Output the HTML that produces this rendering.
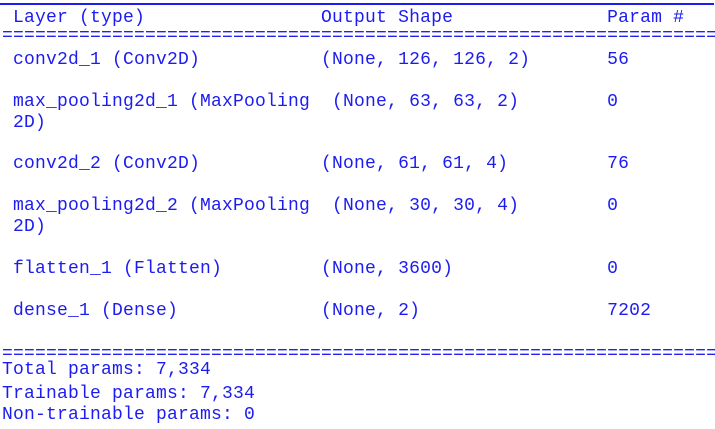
<!DOCTYPE html>
<html><head><style>
html,body{margin:0;padding:0;background:#fff;width:715px;height:429px;overflow:hidden}
.t{position:absolute;left:2px;white-space:pre;font-family:"Liberation Mono","Courier New",monospace;font-size:18px;letter-spacing:0.2px;line-height:22px;color:#1c1cf0}
.top{position:absolute;left:0;top:3px;width:714px;height:2px;background:#1c1cf0}
.eq{overflow:hidden;width:713px;color:#2020f0}
</style></head><body>
<div class="top"></div>
<div class="t" style="top:7px"> Layer (type)                Output Shape              Param #</div>
<div class="t eq" style="top:25px">=================================================================================</div>
<div class="t" style="top:49px"> conv2d_1 (Conv2D)           (None, 126, 126, 2)       56</div>
<div class="t" style="top:91px"> max_pooling2d_1 (MaxPooling  (None, 63, 63, 2)        0</div>
<div class="t" style="top:112px"> 2D)</div>
<div class="t" style="top:153px"> conv2d_2 (Conv2D)           (None, 61, 61, 4)         76</div>
<div class="t" style="top:195px"> max_pooling2d_2 (MaxPooling  (None, 30, 30, 4)        0</div>
<div class="t" style="top:216px"> 2D)</div>
<div class="t" style="top:258px"> flatten_1 (Flatten)         (None, 3600)              0</div>
<div class="t" style="top:300px"> dense_1 (Dense)             (None, 2)                 7202</div>
<div class="t eq" style="top:343px">=================================================================================</div>
<div class="t" style="top:359px">Total params: 7,334</div>
<div class="t" style="top:383px">Trainable params: 7,334</div>
<div class="t" style="top:404px">Non-trainable params: 0</div>
</body></html>
